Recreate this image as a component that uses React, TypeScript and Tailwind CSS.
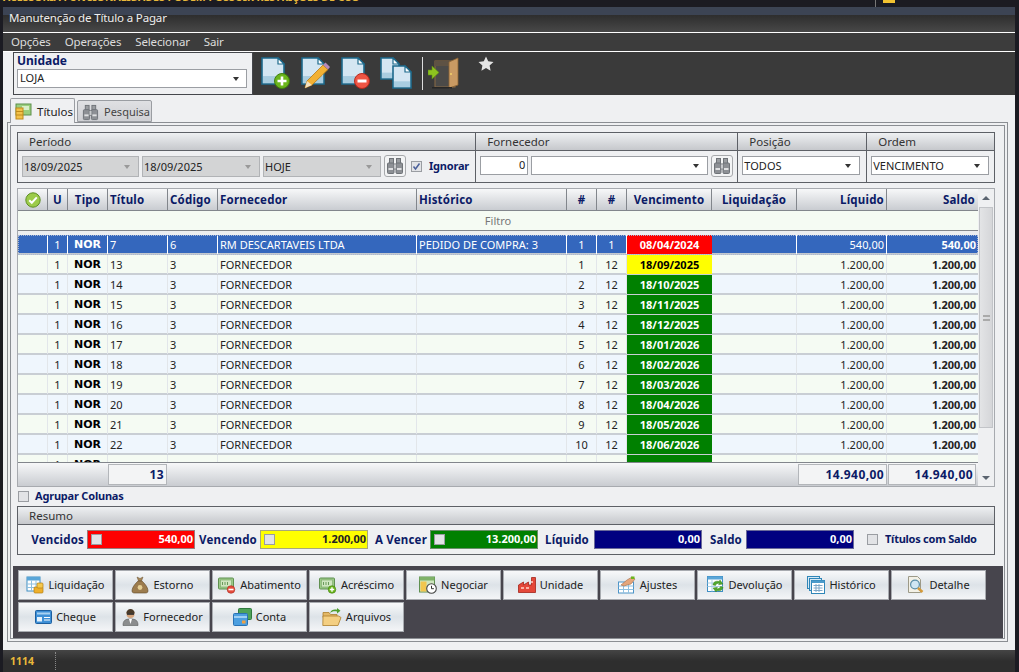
// Manutenção de Título a Pagar - tela de títulos
import type { ReactNode } from "react";

const GRID = "grid grid-cols-[30px_20px_40px_60px_50px_199px_150px_30px_30px_85px_85px_90px_92px]";

const rows = [
  { u: 1, titulo: "7", cod: "6", forn: "RM DESCARTAVEIS LTDA", hist: "PEDIDO DE COMPRA: 3", a: 1, b: 1, venc: "08/04/2024", cor: "red", liq: "540,00", saldo: "540,00" },
  { u: 1, titulo: "13", cod: "3", forn: "FORNECEDOR", hist: "", a: 1, b: 12, venc: "18/09/2025", cor: "yellow", liq: "1.200,00", saldo: "1.200,00" },
  { u: 1, titulo: "14", cod: "3", forn: "FORNECEDOR", hist: "", a: 2, b: 12, venc: "18/10/2025", cor: "green", liq: "1.200,00", saldo: "1.200,00" },
  { u: 1, titulo: "15", cod: "3", forn: "FORNECEDOR", hist: "", a: 3, b: 12, venc: "18/11/2025", cor: "green", liq: "1.200,00", saldo: "1.200,00" },
  { u: 1, titulo: "16", cod: "3", forn: "FORNECEDOR", hist: "", a: 4, b: 12, venc: "18/12/2025", cor: "green", liq: "1.200,00", saldo: "1.200,00" },
  { u: 1, titulo: "17", cod: "3", forn: "FORNECEDOR", hist: "", a: 5, b: 12, venc: "18/01/2026", cor: "green", liq: "1.200,00", saldo: "1.200,00" },
  { u: 1, titulo: "18", cod: "3", forn: "FORNECEDOR", hist: "", a: 6, b: 12, venc: "18/02/2026", cor: "green", liq: "1.200,00", saldo: "1.200,00" },
  { u: 1, titulo: "19", cod: "3", forn: "FORNECEDOR", hist: "", a: 7, b: 12, venc: "18/03/2026", cor: "green", liq: "1.200,00", saldo: "1.200,00" },
  { u: 1, titulo: "20", cod: "3", forn: "FORNECEDOR", hist: "", a: 8, b: 12, venc: "18/04/2026", cor: "green", liq: "1.200,00", saldo: "1.200,00" },
  { u: 1, titulo: "21", cod: "3", forn: "FORNECEDOR", hist: "", a: 9, b: 12, venc: "18/05/2026", cor: "green", liq: "1.200,00", saldo: "1.200,00" },
  { u: 1, titulo: "22", cod: "3", forn: "FORNECEDOR", hist: "", a: 10, b: 12, venc: "18/06/2026", cor: "green", liq: "1.200,00", saldo: "1.200,00" },
  { u: 1, titulo: "", cod: "", forn: "", hist: "", a: 0, b: 0, venc: "", cor: "green", liq: "", saldo: "" },
];

/* ---------- ícones ---------- */

function DocShape({ x = 0, y = 0, w = 24, h = 28 }: { x?: number; y?: number; w?: number; h?: number }) {
  const f = 7;
  return (
    <g>
      <path d={`M${x + 1} ${y + 1}H${x + w - f}L${x + w - 1} ${y + f}V${y + h - 1}H${x + 1}Z`} fill="#d4e6f2" stroke="#1d6a8c" strokeWidth="1.6" />
      <rect x={x + 2} y={y + h - h * 0.32} width={w - 4} height={h * 0.32 - 2} fill="#a9cde0" />
      <path d={`M${x + w - f} ${y + 1}V${y + f}H${x + w - 1}Z`} fill="#fff" stroke="#1d6a8c" strokeWidth="1.2" />
    </g>
  );
}

function IconNovo() {
  return (
    <svg width="30" height="32" viewBox="0 0 30 32">
      <DocShape />
      <circle cx="21" cy="24" r="7.5" fill="#6bb51c" stroke="#3f7f0c" />
      <path d="M21 19.5v9M16.5 24h9" stroke="#fff" strokeWidth="2.6" />
    </svg>
  );
}

function IconEditar() {
  return (
    <svg width="30" height="32" viewBox="0 0 30 32">
      <DocShape />
      <path d="M4 31l2-7L22 8l5 4.5L11 28z" fill="#f2b134" stroke="#b77a14" strokeWidth="0.8" />
      <path d="M22 8l2.5-2.5L29 10l-2 2.5z" fill="#b58ab8" />
      <path d="M4 31l2-7 5 4z" fill="#f4e2c0" />
    </svg>
  );
}

function IconExcluir() {
  return (
    <svg width="30" height="32" viewBox="0 0 30 32">
      <DocShape />
      <circle cx="21" cy="24" r="7.5" fill="#ee5544" stroke="#b8281c" />
      <rect x="16.5" y="22.5" width="9" height="3" fill="#fff" />
    </svg>
  );
}

function IconCopiar() {
  return (
    <svg width="32" height="32" viewBox="0 0 32 32">
      <DocShape x={0} y={0} w={20} h={23} />
      <DocShape x={12} y={8} w={20} h={24} />
    </svg>
  );
}

function IconPorta() {
  return (
    <svg width="32" height="32" viewBox="0 0 32 32">
      <rect x="7" y="4" width="20" height="26" fill="#4b4a48" stroke="#8a6a44" />
      <path d="M7 4h20v5H7z" fill="#5e5244" />
      <path d="M21 5l9-4v27l-9 3z" fill="#c99a63" stroke="#8d6535" strokeWidth="0.8" />
      <circle cx="23" cy="17" r="1" fill="#f3d06a" />
      <path d="M0 13h4v-4l7 6.5-7 6.5v-4H0z" fill="#8dc21f" stroke="#5f8f10" strokeWidth="0.6" />
      <rect x="4" y="30" width="20" height="1.5" fill="#262626" />
    </svg>
  );
}

function IconBinoculo({ size = 18, cinza = true }: { size?: number; cinza?: boolean }) {
  const c = cinza ? "#6f7378" : "#555";
  return (
    <svg width={size} height={size} viewBox="0 0 18 18">
      <rect x="3.5" y="1.5" width="4" height="5" fill="#9a9da1" stroke={c} />
      <rect x="10.5" y="1.5" width="4" height="5" fill="#9a9da1" stroke={c} />
      <rect x="1.5" y="6" width="6.5" height="10.5" rx="1" fill="#8d9095" stroke={c} />
      <rect x="10" y="6" width="6.5" height="10.5" rx="1" fill="#8d9095" stroke={c} />
      <rect x="7.5" y="7" width="3" height="5" fill="#c7c9cc" stroke={c} strokeWidth="0.7" />
      <rect x="2.5" y="11" width="4.5" height="2" fill="#dfe0e2" />
      <rect x="11" y="11" width="4.5" height="2" fill="#dfe0e2" />
    </svg>
  );
}

function IconOk() {
  return (
    <svg width="16" height="16" viewBox="0 0 16 16">
      <circle cx="8" cy="8" r="7.2" fill="#9ccb4a" stroke="#5f8f25" />
      <path d="M4.2 8.2l2.6 2.6 5-5.4" fill="none" stroke="#fff" strokeWidth="2" />
    </svg>
  );
}

function IconTitulos() {
  return (
    <svg width="17" height="17" viewBox="0 0 17 17">
      <rect x="1" y="1" width="15" height="11" fill="#9bcf7e" stroke="#5c8f4d" />
      <rect x="7" y="3" width="7" height="4" fill="#d8efc9" />
      <rect x="1" y="5" width="7" height="11" fill="#f2c24b" stroke="#c08a1c" />
      <path d="M1 8.5h7M1 12h7" stroke="#c08a1c" />
    </svg>
  );
}

function IconLiquidacao() {
  return (
    <svg width="18" height="18" viewBox="0 0 18 18">
      <rect x="1" y="1" width="13" height="14" fill="#fff" stroke="#3f8fc4" />
      <rect x="1" y="1" width="13" height="3.5" fill="#5aa6d8" />
      <path d="M1 8h13M1 11.5h13M5.5 4.5V15M10 4.5V15" stroke="#8fc0e0" />
      <rect x="8" y="11" width="9" height="6" rx="1" fill="#eeb02c" stroke="#b57f12" strokeWidth="0.7" />
      <rect x="11" y="7" width="6" height="5" rx="1" fill="#f5c84c" stroke="#b57f12" strokeWidth="0.7" />
    </svg>
  );
}

function IconEstorno() {
  return (
    <svg width="18" height="18" viewBox="0 0 18 18">
      <path d="M6 1l3 1.5L12 1l-1.5 4h-3z" fill="#a78757" stroke="#6a5230" strokeWidth="0.5" />
      <path d="M7 5h4c2 2 6 6 6 10 0 2-2 2-3 2H4c-1 0-3 0-3-2 0-4 4-8 6-10z" fill="#9c7c4e" stroke="#5f4828" strokeWidth="0.6" />
      <circle cx="9" cy="11.5" r="2.4" fill="#e5cf95" />
    </svg>
  );
}

function Nota() {
  return (
    <g>
      <rect x="0.5" y="1" width="15" height="11" rx="1" fill="#9bc987" stroke="#5f9050" />
      <rect x="2.5" y="3" width="11" height="7" fill="#cfe6c0" stroke="#7aa868" strokeWidth="0.6" />
      <path d="M4.5 5v3M7 5v3M9.5 5v3" stroke="#5f9050" strokeWidth="0.9" />
    </g>
  );
}

function IconAbatimento() {
  return (
    <svg width="18" height="17" viewBox="0 0 18 17">
      <Nota />
      <circle cx="13" cy="12.5" r="3.8" fill="#e64b3c" stroke="#a82a20" strokeWidth="0.6" />
      <rect x="10.5" y="11.7" width="5" height="1.6" fill="#fff" />
    </svg>
  );
}

function IconAcrescimo() {
  return (
    <svg width="18" height="17" viewBox="0 0 18 17">
      <Nota />
      <circle cx="13" cy="12.5" r="3.8" fill="#6bb51c" stroke="#417f10" strokeWidth="0.6" />
      <path d="M13 10.3v4.4M10.8 12.5h4.4" stroke="#fff" strokeWidth="1.4" />
    </svg>
  );
}

function IconNegociar() {
  return (
    <svg width="18" height="18" viewBox="0 0 18 18">
      <rect x="0.5" y="1" width="15" height="15" fill="#cfe6c0" stroke="#5f9050" />
      <rect x="0.5" y="1" width="15" height="3.5" fill="#7fb268" />
      <rect x="1.5" y="5.5" width="6" height="10" fill="#f2c64f" />
      <circle cx="12.5" cy="12.5" r="4.8" fill="#fff" stroke="#444" strokeWidth="1.1" />
      <path d="M12.5 9.8v2.9h2.4" fill="none" stroke="#333" strokeWidth="1" />
    </svg>
  );
}

function IconUnidade() {
  return (
    <svg width="18" height="16" viewBox="0 0 18 16">
      <path d="M0.5 8l5-3v3l5-3v3h3V0.5h4V15.5H0.5z" fill="#e4483a" stroke="#a3241a" strokeWidth="0.8" />
      <path d="M3 11h3M8 11h3M13 5h2" stroke="#ffd4c8" strokeWidth="1.5" />
    </svg>
  );
}

function IconAjustes() {
  return (
    <svg width="18" height="18" viewBox="0 0 18 18">
      <rect x="0.5" y="6" width="15" height="11" fill="#fff" stroke="#4d94c8" />
      <path d="M0.5 10h15M0.5 13.5h15M5.5 6v11M10.5 6v11" stroke="#8fc0e0" />
      <path d="M3 9l6-5 5-3 3 2-4 5-4 1-3 1z" fill="#e5a67c" stroke="#a86f48" strokeWidth="0.6" />
      <rect x="13" y="0.5" width="3.5" height="2.5" fill="#6bb51c" />
    </svg>
  );
}

function IconDevolucao() {
  return (
    <svg width="18" height="18" viewBox="0 0 18 18">
      <rect x="0.5" y="0.5" width="15" height="15" fill="#fff" stroke="#3f8fc4" />
      <rect x="0.5" y="0.5" width="15" height="3" fill="#5aa6d8" />
      <path d="M0.5 7h15M0.5 10.5h15M5 3.5v12" stroke="#a8cfe6" />
      <path d="M6 9c0-3 3-4.5 6-3.5L13 4l3 4-4.5.8 1-1.4C11 7 9 7.5 8.5 9.5z" fill="#4fa82c" stroke="#2e7412" strokeWidth="0.4" />
      <path d="M16 11c0 3-3 4.5-6 3.5L9 16l-3-4 4.5-.8-1 1.4c1.5.4 3.5-.1 4-2.1z" fill="#4fa82c" stroke="#2e7412" strokeWidth="0.4" />
    </svg>
  );
}

function IconHistorico() {
  return (
    <svg width="18" height="18" viewBox="0 0 18 18">
      <rect x="0.5" y="0.5" width="12" height="12" fill="#d6e9f5" stroke="#2f86b8" />
      <rect x="2.5" y="2.5" width="12" height="12" fill="#d6e9f5" stroke="#2f86b8" />
      <rect x="4.5" y="4.5" width="13" height="13" fill="#fff" stroke="#2f86b8" />
      <rect x="4.5" y="4.5" width="13" height="2.5" fill="#4c9bcb" />
      <path d="M6.5 9.5h9M6.5 12h9M6.5 14.5h9M9 8v8M12 8v8" stroke="#7fa8c8" />
    </svg>
  );
}

function IconDetalhe() {
  return (
    <svg width="18" height="18" viewBox="0 0 18 18">
      <path d="M1.5 0.5h9l3 3V16.5h-12z" fill="#f3f1e6" stroke="#9d9a88" />
      <circle cx="8" cy="8.5" r="4.4" fill="#cfe7f3" stroke="#5a8fa8" strokeWidth="1.2" />
      <path d="M11 12l4.5 4" stroke="#d49a3a" strokeWidth="2.4" />
    </svg>
  );
}

function IconCheque() {
  return (
    <svg width="17" height="14" viewBox="0 0 17 14">
      <rect x="0.5" y="0.5" width="16" height="13" rx="1" fill="#3d8fd6" stroke="#1d5f9f" />
      <rect x="2" y="2.5" width="13" height="2" fill="#a8d2f2" />
      <rect x="2" y="7" width="5" height="4.5" fill="#e6f2fb" />
      <path d="M9 7.5h6M9 10h6" stroke="#fff" strokeWidth="1.2" />
    </svg>
  );
}

function IconFornecedor() {
  return (
    <svg width="17" height="18" viewBox="0 0 17 18">
      <path d="M1 17.5c0-5 2-6.5 7.5-6.5s7.5 1.5 7.5 6.5z" fill="#8b8d8e" stroke="#5a5c5d" strokeWidth="0.6" />
      <path d="M7 11l1.5 5 1.5-5z" fill="#fff" />
      <circle cx="8.5" cy="6" r="4" fill="#d6a47c" />
      <path d="M4.3 5.5c0-6 8.4-6 8.4 0z" fill="#4a3a28" />
      <rect x="5" y="5.2" width="7" height="1.6" fill="#2a2a2a" />
    </svg>
  );
}

function IconConta() {
  return (
    <svg width="19" height="18" viewBox="0 0 19 18">
      <rect x="5.5" y="0.5" width="13" height="11" rx="1" fill="#4ea25a" stroke="#2f7a3e" />
      <rect x="0.5" y="5.5" width="14" height="12" rx="1" fill="#4c9fe0" stroke="#2a72b4" />
      <rect x="1" y="8" width="13" height="2" fill="#9fd0f4" />
      <rect x="9" y="12.5" width="3.5" height="3" fill="#f0a040" />
    </svg>
  );
}

function IconArquivos() {
  return (
    <svg width="20" height="18" viewBox="0 0 20 18">
      <path d="M1 4.5h6l1.5 2H15v3H1z" fill="#e3b867" stroke="#ad7f2c" strokeWidth="0.8" />
      <path d="M0.8 17.5L1 8h15.5l2.5 1.5-3 8z" fill="#f4cf82" stroke="#ad7f2c" strokeWidth="0.8" />
      <path d="M8 5c1-3 4-4 7-3.2V0l3.5 2.8L15 5.5V3.6C12 3 10 3.5 8 5z" fill="#4e9e2e" />
    </svg>
  );
}

function Star() {
  return (
    <svg width="16" height="15" viewBox="0 0 16 15">
      <path d="M8 0.5l2.2 4.8 5.3.6-3.9 3.6 1 5.2L8 12.1l-4.6 2.6 1-5.2L.5 5.9l5.3-.6z" fill="#e4e4e4" />
    </svg>
  );
}

/* ---------- pequenos controles ---------- */

function Seta() {
  return <span className="w-0 h-0 border-x-[3.5px] border-x-transparent border-t-[4px] border-t-[#333]" />;
}

function Combo({ texto, largura, cinza }: { texto: string; largura: string; cinza?: boolean }) {
  return (
    <div className={`${largura} mt-[5px] flex items-center justify-between border pl-[1px] pr-[8px] ${cinza ? "h-[21px] bg-[#d3d4d5] border-[#b1b3b6]" : "h-[19px] bg-white border-[#9b9ea3]"}`}>
      <span className="text-[11px] text-[#222] leading-none">{texto}</span>
      {cinza ? <span className="w-0 h-0 border-x-[3.5px] border-x-transparent border-t-[4px] border-t-[#999]" /> : <Seta />}
    </div>
  );
}

function BotaoBusca() {
  return (
    <div className="w-[22px] h-[22px] mt-[4px] flex items-center justify-center bg-[#f3f4f5] border border-[#a7a9ac] rounded-[3px]">
      <IconBinoculo />
    </div>
  );
}

function Check({ marcado, escuro }: { marcado?: boolean; escuro?: boolean }) {
  return (
    <span className={`w-[11px] h-[11px] shrink-0 flex items-center justify-center border ${escuro ? "border-[#7c7f84] bg-[#e9eaec]" : "border-[#9a9da2] bg-[#e2e3e6]"}`}>
      {marcado && (
        <svg width="9" height="9" viewBox="0 0 9 9">
          <path d="M1.5 4.5l2 2.5 4-5.5" fill="none" stroke="#4a5f9a" strokeWidth="1.5" />
        </svg>
      )}
    </span>
  );
}

function Grupo({ titulo, largura, children }: { titulo: string; largura: string; children: ReactNode }) {
  return (
    <div className={`${largura} flex flex-col border border-[#5d6066] -ml-px first:ml-0`}>
      <div className="h-[18px] pl-[11px] flex items-center text-[11.5px] text-[#333] bg-gradient-to-b from-[#eef0f2] to-[#c6c8cc] border-b border-[#5d6066]">{titulo}</div>
      <div className="flex-1 flex items-start px-[4px] gap-[3px]">{children}</div>
    </div>
  );
}

function Head({ children, dir, noBorder }: { children?: ReactNode; dir?: boolean; noBorder?: boolean }) {
  return (
    <div className={`flex items-center px-[2px] text-[11.5px] font-bold text-[#0b1a66] tracking-[0.2px] ${noBorder ? "" : "border-r border-[#82868c]"} ${dir ? "justify-end" : ""}`}>
      {children}
    </div>
  );
}

function Total({ valor, largura }: { valor: string; largura: string }) {
  return (
    <div className={`${largura} h-[21px] flex items-center justify-end pr-[2px] bg-[#f3f4f5] border border-[#b3b6ba] text-[12px] font-bold text-[#0b1a66] tracking-[0.4px]`}>
      {valor}
    </div>
  );
}

function Resumo({ valor, fundo, borda, texto, check }: { valor: string; fundo: string; borda: string; texto: string; check?: boolean }) {
  return (
    <div className={`w-[108px] h-[19px] shrink-0 flex items-center justify-between pl-[3px] pr-[1px] border ${fundo} ${borda} ${texto}`}>
      {check ? <Check /> : <span />}
      <span className="text-[11px] font-bold">{valor}</span>
    </div>
  );
}

function Rotulo({ children, largura }: { children: ReactNode; largura: string }) {
  return <span className={`${largura} shrink-0 text-right text-[11.5px] font-bold text-[#0b1a66] tracking-[0.2px]`}>{children}</span>;
}

function Botao({ icone, texto }: { icone: ReactNode; texto: string }) {
  return (
    <div className="w-[95px] h-[30px] flex items-center justify-center gap-[4px] bg-gradient-to-b from-[#f8f9fa] via-[#dde3e8] to-[#f4f5f7] border border-[#a8abb0] text-[11px] text-[#222]">
      {icone}
      <span>{texto}</span>
    </div>
  );
}

function Linha({ r, sel, alt }: { r: (typeof rows)[number]; sel: boolean; alt: boolean }) {
  const cell = sel ? "pt-[2px] border-r border-white" : "pt-[2px] border-r border-[#e2e6ea]";
  const vencCor =
    r.cor === "red"
      ? "bg-[#ff0000] text-white"
      : r.cor === "yellow"
        ? "bg-[#ffff00] text-black"
        : "bg-[#008000] text-white";
  return (
    <div className={`${GRID} h-[20px] border-b-2 text-[11px] ${sel ? "bg-[#3467bd] text-white border-[#c3c8ce] outline-1 outline-dotted outline-[#a9b8d4] -outline-offset-1" : alt ? "bg-[#eff6fd] text-[#222] border-[#c9ced4]" : "bg-[#f5fbf3] text-[#222] border-[#c9ced4]"}`}>
      <div className={cell} />
      <div className={`${cell} flex items-center justify-center`}>{r.u}</div>
      <div className={`${cell} flex items-center justify-center font-['DejaVu_Sans',sans-serif] font-bold ${sel ? "text-white" : "text-black"}`}>NOR</div>
      <div className={`${cell} flex items-center pl-[2px]`}>{r.titulo}</div>
      <div className={`${cell} flex items-center pl-[2px]`}>{r.cod}</div>
      <div className={`${cell} flex items-center pl-[2px]`}>{r.forn}</div>
      <div className={`${cell} flex items-center pl-[2px]`}>{r.hist}</div>
      <div className={`${cell} flex items-center justify-center`}>{r.a > 0 ? r.a : ""}</div>
      <div className={`${cell} flex items-center justify-center`}>{r.b > 0 ? r.b : ""}</div>
      <div className={`pt-[2px] flex items-center justify-center font-bold ${vencCor}`}>{r.venc}</div>
      <div className={cell} />
      <div className={`${cell} flex items-center justify-end pr-[2px]`}>{r.liq}</div>
      <div className="pt-[2px] flex items-center justify-end pr-[3px] font-bold">{r.saldo}</div>
    </div>
  );
}

export default function App() {
  return (
    <div className="w-[1019px] h-[672px] flex flex-col overflow-hidden bg-[#1b1b22] font-['Noto_Sans','DejaVu_Sans',sans-serif]">
      {/* aviso do topo, quase todo cortado */}
      <div className="h-[7px] shrink-0 flex overflow-hidden relative pl-[3px]">
        <span className="-mt-[10px] text-[10.5px] leading-[15px] h-[15px] font-bold text-[#e8b83a] whitespace-nowrap">ACESSORIA FUNCIONALIDADES PODEM POSSUIR RESTRIÇÕES DE USO</span>
        <span className="absolute left-[875px] top-0 h-[7px] w-px bg-[#777]" />
        <span className="absolute left-[883px] top-0 w-[12px] h-[3px] bg-[#f2c230]" />
      </div>

      <div className="flex-1 flex flex-col ml-[3px] mr-[4px] min-h-0">
        {/* barra de título */}
        <div className="h-[25px] shrink-0 flex flex-col bg-gradient-to-b from-[#222] to-[#484848]">
          <div className="h-[8px] bg-[#3c4454]" />
          <div className="flex-1 flex items-start pl-[6px] -mt-[6px] text-[11.5px] tracking-[-0.15px] text-[#eee]">Manutenção de Título a Pagar</div>
        </div>
        {/* menu */}
        <div className="h-[20px] shrink-0 flex items-center gap-[14px] pl-[8px] bg-[#3c3c3c] border-y border-white text-[11.5px] tracking-[-0.15px] text-[#ddd]">
          <span>Opções</span>
          <span>Operações</span>
          <span>Selecionar</span>
          <span>Sair</span>
        </div>
        {/* barra de ferramentas */}
        <div className="h-[43px] shrink-0 flex bg-[#3a3a3a]">
          <div className="w-[10px] bg-[#eff0f2]" />
          <div className="w-[240px] flex flex-col bg-[#eff0f2] border border-[#45474c] pl-[3px] pr-[5px]">
            <span className="text-[12px] font-bold text-[#0b1a66] leading-[16px]">Unidade</span>
            <div className="h-[19px] flex items-center justify-between bg-white border border-[#9b9ea3] pl-[2px] pr-[7px] text-[11px] text-[#222]">
              LOJA
              <Seta />
            </div>
          </div>
          <div className="flex items-start pt-[5px] pl-[8px] gap-[10px]">
            <IconNovo />
            <IconEditar />
            <IconExcluir />
            <div className="-ml-[1px]"><IconCopiar /></div>
            <div className="h-[33px] w-px bg-[#ddd]" />
            <div className="-ml-[5px]"><IconPorta /></div>
            <div className="ml-[8px] -mt-[1px]"><Star /></div>
          </div>
        </div>

        {/* área clara */}
        <div className="h-[555px] shrink-0 flex flex-col bg-[#eff0f2]">
          {/* abas */}
          <div className="h-[27px] shrink-0 flex items-end pl-[7px] gap-[2px]">
            <div className="w-[65px] h-[25px] -mb-px z-10 flex items-center gap-[5px] pl-[4px] pt-[1px] bg-[#eff0f2] border border-b-0 border-[#9a9da2] rounded-t-[2px] text-[11.5px] text-[#222]">
              <IconTitulos />
              Títulos
            </div>
            <div className="w-[75px] h-[22px] flex items-center gap-[5px] pl-[4px] pt-[2px] bg-gradient-to-b from-[#dfe0e3] to-[#cfd0d4] border border-[#9a9da2] rounded-t-[2px] text-[11px] text-[#444]">
              <IconBinoculo size={17} />
              Pesquisa
            </div>
          </div>

          {/* painel da aba */}
          <div className="w-[1001px] h-[520px] ml-[4px] p-[2px] border border-[#8b8e93]">
            <div className="h-full flex flex-col border border-[#8b8e93]">
              <div className="pl-[6px] pt-[6px] pr-[9px]">
                {/* filtros */}
                <div className="flex h-[51px]">
                  <Grupo titulo="Período" largura="w-[460px]">
                    <Combo texto="18/09/2025" largura="w-[117px]" cinza />
                    <Combo texto="18/09/2025" largura="w-[118px]" cinza />
                    <Combo texto="HOJE" largura="w-[118px]" cinza />
                    <BotaoBusca />
                    <div className="ml-[2px] mt-[7px] flex items-center gap-[7px]">
                      <Check marcado />
                      <span className="text-[11px] font-bold text-[#0b1a66] tracking-[-0.2px]">Ignorar</span>
                    </div>
                  </Grupo>
                  <Grupo titulo="Fornecedor" largura="w-[263px]">
                    <div className="w-[48px] h-[19px] mt-[5px] flex items-center justify-end pr-[2px] bg-white border border-[#9b9ea3] text-[11px] text-[#222]">0</div>
                    <Combo texto="" largura="w-[178px]" />
                    <BotaoBusca />
                  </Grupo>
                  <Grupo titulo="Posição" largura="w-[130px]">
                    <Combo texto="TODOS" largura="w-[118px]" />
                  </Grupo>
                  <Grupo titulo="Ordem" largura="w-[129px]">
                    <Combo texto="VENCIMENTO" largura="w-[118px]" />
                  </Grupo>
                </div>

                {/* grade */}
                <div className="mt-[5px] h-[299px] flex bg-[#f5fbf3] border border-[#a7aaaf]">
                  <div className="w-[960px] flex flex-col">
                    <div className={`${GRID} h-[22px] shrink-0 bg-gradient-to-b from-[#f7f8f9] to-[#c9ccd1] border-b border-[#82868c]`}>
                      <Head><span className="mx-auto"><IconOk /></span></Head>
                      <Head><span className="mx-auto">U</span></Head>
                      <Head><span className="mx-auto">Tipo</span></Head>
                      <Head>Título</Head>
                      <Head>Código</Head>
                      <Head>Fornecedor</Head>
                      <Head>Histórico</Head>
                      <Head><span className="mx-auto">#</span></Head>
                      <Head><span className="mx-auto">#</span></Head>
                      <Head><span className="mx-auto">Vencimento</span></Head>
                      <Head><span className="mx-auto">Liquidação</span></Head>
                      <Head dir>Líquido</Head>
                      <Head dir noBorder><span className="pr-[2px]">Saldo</span></Head>
                    </div>
                    <div className="h-[20px] shrink-0 pt-[1px] flex items-center justify-center border-b border-[#82868c] text-[11px] text-[#777]">Filtro</div>
                    <div className="h-[4px] shrink-0 bg-[#eceef0]" />
                    <div className="flex-1 min-h-0 overflow-hidden">
                      {rows.map((r, i) => (
                        <Linha key={i} r={r} sel={i === 0} alt={i % 2 === 0} />
                      ))}
                    </div>
                    <div className="h-[24px] shrink-0 flex items-center bg-gradient-to-b from-[#f7f8f9] to-[#c9ccd1] border-t border-[#82868c]">
                      <div className="ml-[90px]"><Total valor="13" largura="w-[59px]" /></div>
                      <div className="ml-auto mr-[2px] flex gap-[1px]">
                        <Total valor="14.940,00" largura="w-[89px]" />
                        <Total valor="14.940,00" largura="w-[88px]" />
                      </div>
                    </div>
                  </div>
                  {/* barra de rolagem */}
                  <div className="flex-1 flex flex-col items-center bg-[#eff0f2]">
                    <div className="h-[18px] shrink-0 flex items-center">
                      <span className="w-0 h-0 border-x-[4px] border-x-transparent border-b-[4px] border-b-[#5b6470]" />
                    </div>
                    <div className="w-[14px] h-[221px] shrink-0 flex items-center justify-center bg-gradient-to-r from-[#e3e4e6] to-[#d5d6d9] border border-[#c2c4c8]">
                      <div className="w-[7px] h-[6px] border-y-2 border-[#aaa]" />
                    </div>
                    <div className="flex-1" />
                    <div className="h-[17px] shrink-0 flex items-center">
                      <span className="w-0 h-0 border-x-[4px] border-x-transparent border-t-[4px] border-t-[#5b6470]" />
                    </div>
                  </div>
                </div>

                {/* agrupar */}
                <div className="h-[19px] flex items-center gap-[6px] pl-px">
                  <Check />
                  <span className="text-[11px] font-bold text-[#0b1a66] tracking-[-0.2px]">Agrupar Colunas</span>
                </div>

                {/* resumo */}
                <div className="h-[49px] flex flex-col border border-[#5d6066]">
                  <div className="h-[18px] pl-[11px] flex items-center text-[11.5px] text-[#333] bg-gradient-to-b from-[#eef0f2] to-[#c6c8cc] border-b border-[#5d6066]">Resumo</div>
                  <div className="flex-1 flex items-center">
                    <Rotulo largura="w-[66px]">Vencidos</Rotulo>
                    <div className="w-[3px]" />
                    <Resumo valor="540,00" fundo="bg-[#ff0000]" borda="border-[#9a7a7a]" texto="text-white" check />
                    <Rotulo largura="w-[62px]">Vencendo</Rotulo>
                    <div className="w-[3px]" />
                    <Resumo valor="1.200,00" fundo="bg-[#ffff00]" borda="border-[#a8a87a]" texto="text-[#222]" check />
                    <Rotulo largura="w-[59px]">A Vencer</Rotulo>
                    <div className="w-[3px]" />
                    <Resumo valor="13.200,00" fundo="bg-[#008000]" borda="border-[#6a8f6a]" texto="text-white" check />
                    <Rotulo largura="w-[51px]">Líquido</Rotulo>
                    <div className="w-[5px]" />
                    <Resumo valor="0,00" fundo="bg-[#000080]" borda="border-[#6a6a9a]" texto="text-white" />
                    <Rotulo largura="w-[40px]">Saldo</Rotulo>
                    <div className="w-[4px]" />
                    <Resumo valor="0,00" fundo="bg-[#000080]" borda="border-[#6a6a9a]" texto="text-white" />
                    <div className="ml-[13px] flex items-center gap-[7px]">
                      <Check />
                      <span className="text-[11px] font-bold text-[#0b1a66] tracking-[-0.25px]">Títulos com Saldo</span>
                    </div>
                  </div>
                </div>
              </div>

              {/* botões de ação */}
              <div className="mt-[11px] ml-[2px] mr-[1px] h-[72px] bg-[#47454d] pl-[5px] pt-[4px] flex flex-wrap content-start gap-[2px]">
                <Botao icone={<IconLiquidacao />} texto="Liquidação" />
                <Botao icone={<IconEstorno />} texto="Estorno" />
                <Botao icone={<IconAbatimento />} texto="Abatimento" />
                <Botao icone={<IconAcrescimo />} texto="Acréscimo" />
                <Botao icone={<IconNegociar />} texto="Negociar" />
                <Botao icone={<IconUnidade />} texto="Unidade" />
                <Botao icone={<IconAjustes />} texto="Ajustes" />
                <Botao icone={<IconDevolucao />} texto="Devolução" />
                <Botao icone={<IconHistorico />} texto="Histórico" />
                <Botao icone={<IconDetalhe />} texto="Detalhe" />
                <Botao icone={<IconCheque />} texto="Cheque" />
                <Botao icone={<IconFornecedor />} texto="Fornecedor" />
                <Botao icone={<IconConta />} texto="Conta" />
                <Botao icone={<IconArquivos />} texto="Arquivos" />
              </div>
            </div>
          </div>
        </div>

        {/* rodapé */}
        <div className="h-[22px] shrink-0 flex items-start pt-[2px] bg-gradient-to-b from-[#454545] via-[#2e2e2e] to-[#2e2e2e]">
          <span className="w-[46px] ml-[7px] h-[18px] text-[10.5px] leading-[18px] font-bold text-[#e8b83a] border-r border-dotted border-[#888]">1114</span>
        </div>
      </div>
    </div>
  );
}
